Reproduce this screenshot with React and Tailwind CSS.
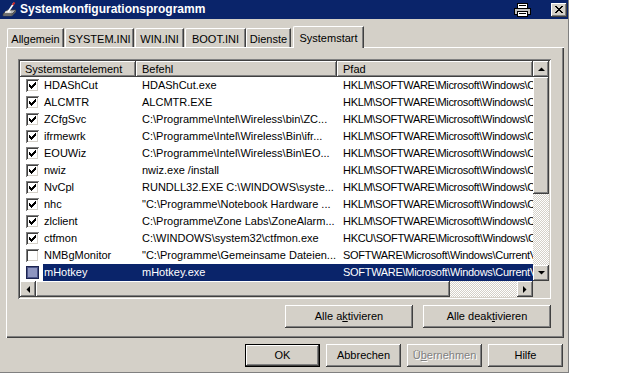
import React from 'react';

const raised = "shadow-[inset_-1px_-1px_#404040,inset_1px_1px_#ffffff,inset_-2px_-2px_#808080,inset_2px_2px_#d4d0c8]";
const track = "bg-[image:repeating-conic-gradient(#ffffff_0_25%,#d4d0c8_0_50%)] bg-[length:2px_2px]";

const rows = [
  { n: 'HDAShCut', c: 'HDAShCut.exe', p: 'HKLM\\SOFTWARE\\Microsoft\\Windows\\CurrentVersion\\Run', k: true },
  { n: 'ALCMTR', c: 'ALCMTR.EXE', p: 'HKLM\\SOFTWARE\\Microsoft\\Windows\\CurrentVersion\\Run', k: true },
  { n: 'ZCfgSvc', c: 'C:\\Programme\\Intel\\Wireless\\bin\\ZC...', p: 'HKLM\\SOFTWARE\\Microsoft\\Windows\\CurrentVersion\\Run', k: true },
  { n: 'ifrmewrk', c: 'C:\\Programme\\Intel\\Wireless\\Bin\\ifr...', p: 'HKLM\\SOFTWARE\\Microsoft\\Windows\\CurrentVersion\\Run', k: true },
  { n: 'EOUWiz', c: 'C:\\Programme\\Intel\\Wireless\\Bin\\EO...', p: 'HKLM\\SOFTWARE\\Microsoft\\Windows\\CurrentVersion\\Run', k: true },
  { n: 'nwiz', c: 'nwiz.exe /install', p: 'HKLM\\SOFTWARE\\Microsoft\\Windows\\CurrentVersion\\Run', k: true },
  { n: 'NvCpl', c: 'RUNDLL32.EXE C:\\WINDOWS\\syste...', p: 'HKLM\\SOFTWARE\\Microsoft\\Windows\\CurrentVersion\\Run', k: true },
  { n: 'nhc', c: '"C:\\Programme\\Notebook Hardware ...', p: 'HKLM\\SOFTWARE\\Microsoft\\Windows\\CurrentVersion\\Run', k: true },
  { n: 'zlclient', c: 'C:\\Programme\\Zone Labs\\ZoneAlarm...', p: 'HKLM\\SOFTWARE\\Microsoft\\Windows\\CurrentVersion\\Run', k: true },
  { n: 'ctfmon', c: 'C:\\WINDOWS\\system32\\ctfmon.exe', p: 'HKCU\\SOFTWARE\\Microsoft\\Windows\\CurrentVersion\\Run', k: true },
  { n: 'NMBgMonitor', c: '"C:\\Programme\\Gemeinsame Dateien...', p: 'SOFTWARE\\Microsoft\\Windows\\CurrentVersion\\Run', k: false },
  { n: 'mHotkey', c: 'mHotkey.exe', p: 'SOFTWARE\\Microsoft\\Windows\\CurrentVersion\\Run', k: false, sel: true },
];

function CheckMark() {
  return (
    <svg width="7" height="7" shapeRendering="crispEdges" className="block">
      <rect x="6" y="0" width="1" height="1" fill="#000" />
      <rect x="5" y="1" width="2" height="1" fill="#000" />
      <rect x="0" y="2" width="1" height="1" fill="#000" />
      <rect x="4" y="2" width="3" height="1" fill="#000" />
      <rect x="0" y="3" width="2" height="1" fill="#000" />
      <rect x="3" y="3" width="3" height="1" fill="#000" />
      <rect x="0" y="4" width="5" height="1" fill="#000" />
      <rect x="1" y="5" width="3" height="1" fill="#000" />
      <rect x="2" y="6" width="1" height="1" fill="#000" />
    </svg>
  );
}

function Check({ checked, selected }) {
  if (selected) {
    return <div className="w-[13px] h-[13px] shrink-0 bg-[#8e95c0] shadow-[inset_0_0_0_1px_#1c2350,inset_0_0_0_2px_#4a5488]" />;
  }
  return (
    <div className="w-[13px] h-[13px] shrink-0 bg-white p-[3px] shadow-[inset_1px_1px_#808080,inset_-1px_-1px_#ffffff,inset_2px_2px_#404040,inset_-2px_-2px_#d4d0c8]">
      {checked && <CheckMark />}
    </div>
  );
}

function Arrow({ dir }) {
  const pts = {
    up: '0,4 7,4 3.5,0.5',
    down: '0,0 7,0 3.5,3.5',
    left: '4,0 4,7 0.5,3.5',
    right: '0,0 0,7 3.5,3.5',
  }[dir];
  const vertical = dir === 'up' || dir === 'down';
  return (
    <svg width={vertical ? 7 : 4} height={vertical ? 4 : 7} className="block">
      <polygon points={pts} fill="#000" />
    </svg>
  );
}

function ScrollBtn({ dir }) {
  return (
    <div className={`w-[16px] h-[16px] shrink-0 bg-[#d4d0c8] flex items-center justify-center ${raised}`}>
      <Arrow dir={dir} />
    </div>
  );
}

function Btn({ children, w = 'w-[75px]', def = false, disabled = false }) {
  return (
    <div className={`${w} h-[23px] shrink-0 ${def ? 'border border-black' : ''}`}>
      <div className={`w-full h-full bg-[#d4d0c8] flex items-center justify-center text-[11px] ${raised} ${disabled ? 'text-[#808080] [text-shadow:1px_1px_0_#ffffff]' : 'text-black'}`}>
        {children}
      </div>
    </div>
  );
}

function Tab({ label, w, ml, active }) {
  if (active) {
    return (
      <div className={`${w} ${ml} h-[22px] -mb-[1px] relative z-10 bg-[#d4d0c8] border-t border-l border-white rounded-tl-[2px] shadow-[inset_-1px_0_#808080] border-r border-r-[#404040] flex items-start justify-center pt-[3px] text-[11px]`}>
        {label}
      </div>
    );
  }
  return (
    <div className={`${w} ${ml} h-[19px] bg-[#d4d0c8] border-t border-l border-white rounded-tl-[2px] shadow-[inset_-1px_0_#808080] border-r border-r-[#404040] flex items-start justify-center pt-[2px] text-[11px]`}>
      {label}
    </div>
  );
}

function TitleIcon() {
  return (
    <svg width="16" height="16" viewBox="0 0 16 16" className="block shrink-0">
      <polygon points="1,12 10,12 14,8 5,8" fill="#b8b8b8" stroke="#404040" strokeWidth="0.8" />
      <polygon points="1,12 10,12 10,14 1,14" fill="#808080" stroke="#404040" strokeWidth="0.6" />
      <polygon points="10,12 14,8 14,10 10,14" fill="#606060" />
      <rect x="3" y="9.5" width="6" height="1" fill="#ffffff" />
      <line x1="6" y1="10" x2="12" y2="1" stroke="#ffffff" strokeWidth="1.6" />
      <line x1="10.6" y1="3" x2="12.6" y2="0.5" stroke="#d02020" strokeWidth="1.8" />
    </svg>
  );
}

function PrintIcon() {
  return (
    <svg width="17" height="14" viewBox="0 0 17 14" className="block shrink-0">
      <rect x="3.5" y="0.5" width="10" height="5" fill="#ffffff" stroke="#000" />
      <rect x="0.5" y="5.5" width="16" height="6" fill="#c0c0c0" stroke="#000" />
      <rect x="3.5" y="8.5" width="10" height="5" fill="#ffffff" stroke="#000" />
      <line x1="5" y1="10.5" x2="12" y2="10.5" stroke="#000" />
      <line x1="5" y1="2.5" x2="12" y2="2.5" stroke="#000" />
    </svg>
  );
}

function CloseX() {
  return (
    <svg width="8" height="7" shapeRendering="crispEdges" className="block">
      <rect x="0" y="0" width="2" height="1" fill="#000" /><rect x="6" y="0" width="2" height="1" fill="#000" />
      <rect x="1" y="1" width="2" height="1" fill="#000" /><rect x="5" y="1" width="2" height="1" fill="#000" />
      <rect x="2" y="2" width="4" height="1" fill="#000" />
      <rect x="3" y="3" width="2" height="1" fill="#000" />
      <rect x="2" y="4" width="4" height="1" fill="#000" />
      <rect x="1" y="5" width="2" height="1" fill="#000" /><rect x="5" y="5" width="2" height="1" fill="#000" />
      <rect x="0" y="6" width="2" height="1" fill="#000" /><rect x="6" y="6" width="2" height="1" fill="#000" />
    </svg>
  );
}

export default function App() {
  return (
    <div className="w-[627px] h-[376px] bg-white overflow-hidden font-['Liberation_Sans',Arial,sans-serif] text-[11px] text-black">
      <div className="w-[569px] h-[373px] bg-[#d4d0c8] border-r border-b border-[#808080] flex flex-col">
        {/* Title bar */}
        <div className="h-[19px] shrink-0 bg-[#0a246a] flex items-center pl-[2px] pr-[1px]">
          <TitleIcon />
          <span className="ml-[2px] text-white font-bold text-[12px] leading-[19px]">Systemkonfigurationsprogramm</span>
          <div className="flex-1" />
          <PrintIcon />
          <div className={`ml-[20px] w-[16px] h-[14px] bg-[#d4d0c8] flex items-center justify-center ${raised}`}>
            <CloseX />
          </div>
        </div>

        {/* Tabs */}
        <div className="mt-[7px] h-[21px] shrink-0 flex items-end pl-[7px]">
          <Tab label="Allgemein" w="w-[57px]" ml="ml-0" />
          <Tab label="SYSTEM.INI" w="w-[69px]" ml="ml-[1px]" />
          <Tab label="WIN.INI" w="w-[49px]" ml="ml-[1px]" />
          <Tab label="BOOT.INI" w="w-[61px]" ml="ml-[1px]" />
          <Tab label="Dienste" w="w-[45px]" ml="ml-0" />
          <Tab label="Systemstart" w="w-[71px]" ml="ml-[2px]" active />
        </div>

        {/* Panel */}
        <div className="ml-[6px] w-[558px] h-[291px] shrink-0 bg-[#d4d0c8] shadow-[inset_1px_1px_#ffffff,inset_-1px_-1px_#404040,inset_-2px_-2px_#808080] pt-[12px] pl-[12px] flex flex-col">
          {/* List view */}
          <div className="w-[533px] h-[240px] p-[2px] bg-white shadow-[inset_1px_1px_#808080,inset_-1px_-1px_#ffffff,inset_2px_2px_#404040,inset_-2px_-2px_#d4d0c8] flex flex-col">
            <div className="flex h-[220px]">
              <div className="flex-1 min-w-0 flex flex-col overflow-hidden">
                {/* Header */}
                <div className="flex h-[16px] shrink-0 bg-[#d4d0c8]">
                  <div className={`w-[116px] shrink-0 h-full pl-[5px] leading-[16px] ${raised}`}>Systemstartelement</div>
                  <div className={`w-[201px] shrink-0 h-full pl-[6px] leading-[16px] ${raised}`}>Befehl</div>
                  <div className={`flex-1 min-w-0 h-full pl-[6px] leading-[16px] ${raised}`}>Pfad</div>
                </div>
                {rows.map((r) => (
                  <div key={r.n} className="flex h-[17px] shrink-0 items-center leading-[17px] whitespace-nowrap">
                    <div className="w-[23px] shrink-0 pl-[6px] flex items-center">
                      <Check checked={r.k} selected={r.sel} />
                    </div>
                    <div className={`w-[93px] shrink-0 h-full pl-[1px] overflow-hidden ${r.sel ? 'bg-[#0a246a] text-white' : ''}`}>{r.n}</div>
                    <div className={`w-[201px] shrink-0 h-full pl-[6px] overflow-hidden ${r.sel ? 'bg-[#0a246a] text-white' : ''}`}>{r.c}</div>
                    <div className={`flex-1 min-w-0 h-full pl-[6px] overflow-hidden tracking-[-0.3px] ${r.sel ? 'bg-[#0a246a] text-white' : ''}`}>{r.p}</div>
                  </div>
                ))}
              </div>
              {/* Vertical scrollbar */}
              <div className="w-[16px] shrink-0 flex flex-col">
                <ScrollBtn dir="up" />
                <div className={`h-[117px] shrink-0 bg-[#d4d0c8] ${raised}`} />
                <div className={`flex-1 ${track}`} />
                <ScrollBtn dir="down" />
              </div>
            </div>
            {/* Horizontal scrollbar */}
            <div className="flex h-[16px] shrink-0">
              <ScrollBtn dir="left" />
              <div className={`w-[414px] shrink-0 h-full bg-[#d4d0c8] ${raised}`} />
              <div className={`flex-1 h-full ${track}`} />
              <ScrollBtn dir="right" />
              <div className="w-[16px] h-full bg-[#d4d0c8] shrink-0" />
            </div>
          </div>

          <div className="mt-[6px] pr-[13px] flex justify-end gap-[10px]">
            <Btn w="w-[128px]">Alle a<span className="underline">k</span>tivieren</Btn>
            <Btn w="w-[128px]">Alle deak<span className="underline">t</span>ivieren</Btn>
          </div>
        </div>

        {/* Bottom buttons */}
        <div className="mt-[6px] pr-[5px] flex justify-end gap-[6px]">
          <Btn def>OK</Btn>
          <Btn>Abbrechen</Btn>
          <Btn disabled>Ü<span className="underline">b</span>ernehmen</Btn>
          <Btn>Hilfe</Btn>
        </div>
      </div>
    </div>
  );
}
